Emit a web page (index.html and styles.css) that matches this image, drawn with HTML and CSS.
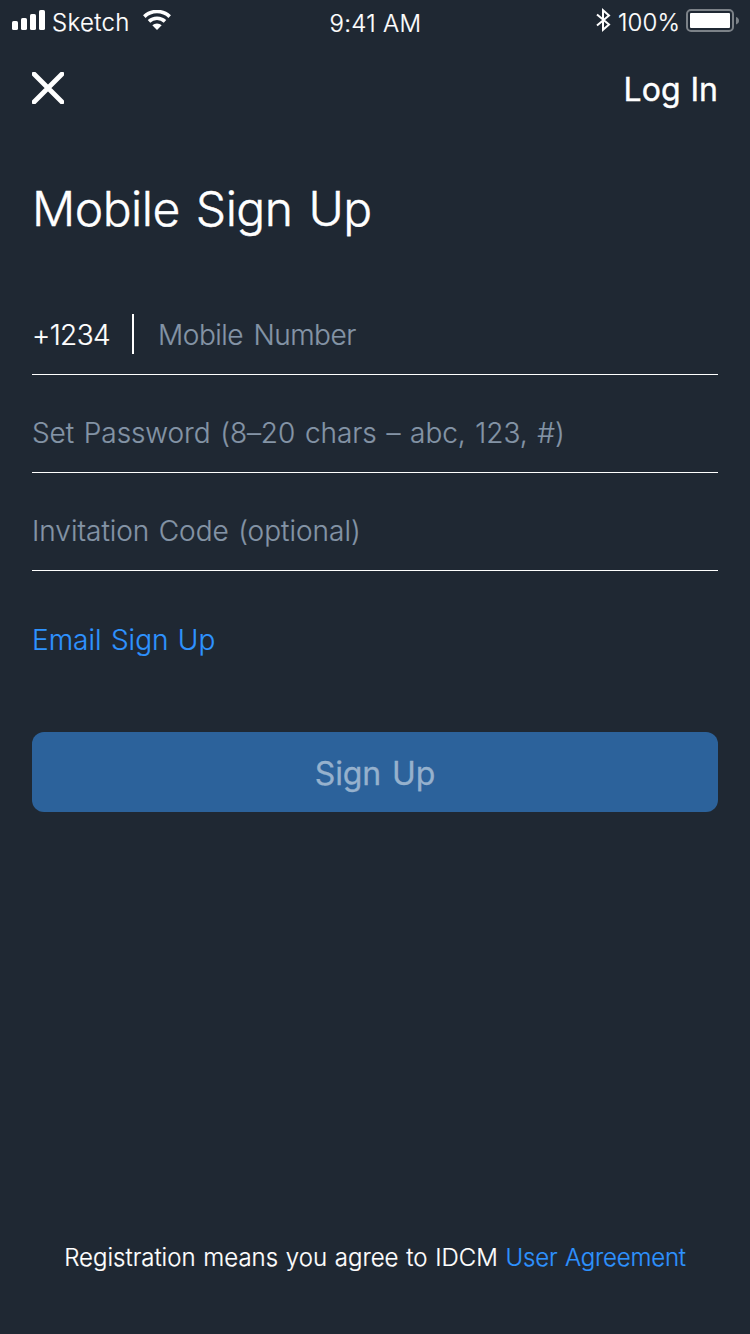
FILE: index.html
```html
<!DOCTYPE html>
<html lang="en">
<head>
<meta charset="utf-8">
<title>Mobile Sign Up</title>
<link rel="stylesheet" href="styles.css">
</head>
<body>
<main class="screen">
  <header class="status">
    <div class="status-left">
      <svg class="signal" width="34" height="20" viewBox="0 0 34 20" fill="#fff"><rect x="0" y="11" width="6" height="9" rx="1.6"/><rect x="9" y="8" width="6" height="12" rx="1.6"/><rect x="18" y="4" width="6" height="16" rx="1.6"/><rect x="27" y="0" width="6" height="20" rx="1.6"/></svg>
      <span class="carrier">Sketch</span>
      <svg class="wifi" width="28" height="20" viewBox="0 0 28 20"><path d="M1.3 6.6A18.3 18.3 0 0 1 26.7 6.6M6 11.4A11.6 11.6 0 0 1 22 11.4" fill="none" stroke="#fff" stroke-width="3.6"/><path d="M14 20L9.3 15.3A6.8 6.8 0 0 1 18.7 15.3Z" fill="#fff"/></svg>
    </div>
    <span class="clock">9:41 AM</span>
    <div class="status-right">
      <svg class="bluetooth" width="15" height="24" viewBox="0 0 15 24" fill="none" stroke="#fff" stroke-width="2"><path d="M1 6.4L13 16.6L7 21.8V2.2L13 7.4L1 17.6"/></svg>
      <span class="percent">100%</span>
      <svg class="battery" width="53" height="23" viewBox="0 0 53 23"><rect x="1" y="1" width="46" height="21" rx="4" fill="none" stroke="#7c8288" stroke-width="2"/><rect x="4" y="4" width="40" height="15" rx="1" fill="#fff"/><path d="M50 8C52 8.6 53 10 53 11.700S52 14.800 50 15.400Z" fill="#7c8288"/></svg>
    </div>
  </header>
  <nav class="nav">
    <svg class="close" width="32" height="32" viewBox="0 0 32 32"><path d="M2 2L30 30M30 2L2 30" stroke="#fff" stroke-width="4.8" stroke-linecap="round"/></svg>
    <a class="login">Log In</a>
  </nav>
  <h1 class="title">Mobile Sign Up</h1>
  <form class="form">
    <div class="field"><span class="code">+1234</span><i class="divider"></i><span class="hint number">Mobile Number</span></div>
    <div class="field"><span class="hint password">Set Password (8–20 chars – abc, 123, #)</span></div>
    <div class="field"><span class="hint invite">Invitation Code (optional)</span></div>
  </form>
  <a class="email">Email Sign Up</a>
  <div class="submit">Sign Up</div>
  <footer class="legal">Registration means you agree to IDCM <a class="agreement">User Agreement</a></footer>
</main>
</body>
</html>
```
FILE: styles.css
```css
* { box-sizing: border-box; }
body { margin: 0; background: #1f2833; color: #fff; font-family: Inter, "Noto Sans", sans-serif; font-weight: 300; -webkit-text-stroke: .2px currentColor; }
.screen { width: 750px; height: 1334px; display: flex; flex-direction: column; }
.status { height: 48px; display: grid; grid-template-columns: 1fr auto 1fr; padding: 0 11px 0 12px; font-size: 24px; line-height: 46px; }
.clock { line-height: 48px; letter-spacing: .3px; }
.status-left, .status-right { display: flex; align-items: flex-start; }
.status-right { justify-content: flex-end; }
.signal { margin-top: 10px; }
.carrier { margin-left: 6px; letter-spacing: .35px; }
.wifi { margin: 10px 0 0 13px; }
.bluetooth { margin: 8px 7px 0 0; }
.percent { letter-spacing: .1px; }
.battery { margin: 9px 0 0 6px; }
.nav { height: 80px; padding: 0 32px; display: flex; align-items: center; justify-content: space-between; }
.login { font-size: 32px; font-weight: 400; padding-top: 2px; word-spacing: 1px; -webkit-text-stroke-width: .4px; }
.title { margin: 49px 32px 0; font-size: 48px; line-height: 64px; font-weight: 300; letter-spacing: -.5px; word-spacing: 3px; -webkit-text-stroke-width: .45px; }
.form { margin: 54px 32px 0; }
.field { height: 80px; margin-bottom: 18px; border-bottom: 1px solid #fff; display: flex; align-items: center; font-size: 28px; }
.divider { width: 2px; height: 40px; background: #fff; margin: -1px 24px 0 22px; }
.code { letter-spacing: -.6px; }
.hint { color: #8494a6; }
.number { letter-spacing: -.5px; word-spacing: 3px; }
.password { letter-spacing: -.08px; word-spacing: 2px; }
.invite { word-spacing: 1.5px; }
.email { margin: 31px 32px 0; font-size: 28px; line-height: 40px; color: #2e93ff; word-spacing: 1.5px; }
.submit { margin: 72px 32px 0; height: 80px; border-radius: 12px; background: #2c629b; color: #96b1cd; font-size: 32px; font-weight: 400; letter-spacing: -.1px; word-spacing: 2px; -webkit-text-stroke-width: .3px; display: flex; align-items: center; justify-content: center; padding-top: 2px; }
.legal { margin: auto 0 58px; font-size: 24px; line-height: 36px; text-align: center; word-spacing: 1px; }
.agreement { color: #2e93ff; letter-spacing: -.2px; }
```
